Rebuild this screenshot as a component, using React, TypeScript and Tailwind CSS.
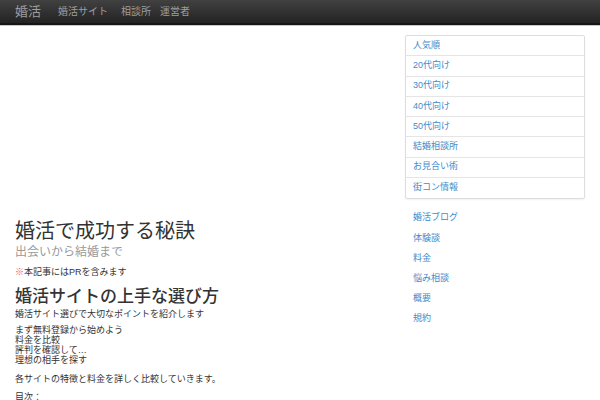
const font = { fontFamily: '"Liberation Sans", "Noto Sans CJK JP", sans-serif' };

const panelLinks = ["人気順", "20代向け", "30代向け", "40代向け", "50代向け", "結婚相談所", "お見合い術", "街コン情報"];
const plainLinks = ["婚活ブログ", "体験談", "料金", "悩み相談", "概要", "規約"];

export default function App() {
	return (
		<div className="w-[600px] h-[400px] overflow-hidden bg-white text-[#333]" style={font}>
			<nav className="h-[25px] bg-gradient-to-b from-[#414141] to-[#232323] border-b-2 border-b-[#151515] flex items-center shadow-[0_1px_0_#c8c8c8]">
				<span className="ml-[15px] text-[13px] text-[#9d9d9d] leading-none">婚活</span>
				<span className="ml-[17px] text-[10px] text-[#9d9d9d] leading-none">婚活サイト</span>
				<span className="ml-[13px] text-[10px] text-[#9d9d9d] leading-none">相談所</span>
				<span className="ml-[9px] text-[10px] text-[#9d9d9d] leading-none">運営者</span>
			</nav>

			<div className="flex px-[15px] gap-[15px]">
				<main className="flex-1 min-w-0">
					<div className="h-[194px]" />
					<h1 className="text-[20px] leading-[24px] font-normal">婚活で成功する秘訣</h1>
					<p className="mt-[1px] text-[12px] leading-[16px] text-[#999]">出会いから結婚まで</p>
					<p className="mt-[5px] text-[9px] leading-[14px]">
						<span className="text-[#e05a5a]">※</span>本記事にはPRを含みます
					</p>
					<h2 className="mt-[7px] text-[17px] leading-[22px] font-medium">婚活サイトの上手な選び方</h2>
					<p className="text-[9px] leading-[12px]">婚活サイト選びで大切なポイントを紹介します</p>
					<p className="mt-[5px] text-[9px] leading-[10px]">
						まず無料登録から始めよう
						<br />
						料金を比較
						<br />
						評判を確認して…
						<br />
						理想の相手を探す
					</p>
					<p className="mt-[8px] text-[9px] leading-[12px]">各サイトの特徴と料金を詳しく比較していきます。</p>
					<p className="mt-[6px] text-[9px] leading-[12px]">目次：</p>
				</main>

				<aside className="w-[180px] shrink-0 pt-[10px]">
					<div className="border border-[#ddd] rounded-[2px] shadow-[0_1px_2px_rgba(0,0,0,0.06)]">
						{panelLinks.map((t, i) => (
							<div
								key={t}
								className={`h-[20.25px] flex items-center px-[7px] text-[9px] text-[#428bca] ${i < panelLinks.length - 1 ? "border-b border-[#e5e5e5]" : ""}`}
							>
								{t}
							</div>
						))}
					</div>
					<div className="mt-[9px]">
						{plainLinks.map((t) => (
							<div key={t} className="h-[20.2px] flex items-center px-[8px] text-[9px] text-[#428bca]">
								{t}
							</div>
						))}
					</div>
				</aside>
			</div>
		</div>
	);
}
